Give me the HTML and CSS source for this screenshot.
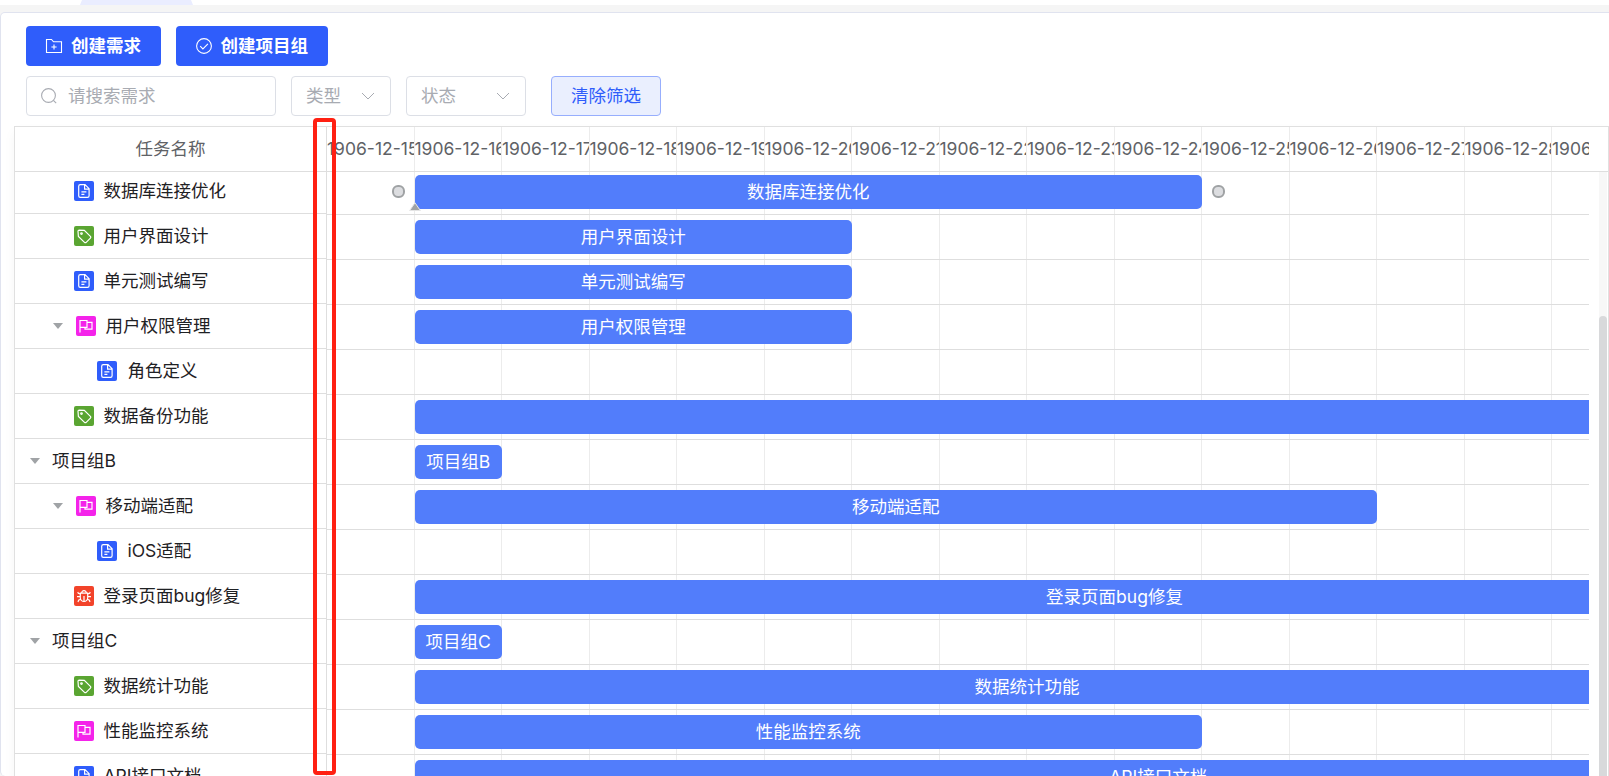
FILE: index.html
```html
<!DOCTYPE html>
<html lang="zh">
<head>
    <meta charset="UTF-8">
    <meta name="viewport" content="width=device-width, initial-scale=1.0">
    <title>需求甘特图</title>
    <link rel="stylesheet" href="styles.css">
</head>
<body>
  <!-- 图标 -->
  <svg class="sprite" aria-hidden="true">
    <symbol id="icon-doc" viewBox="0 0 20 20">
      <path d="M11 3.600H6.300a1.600 1.600 0 0 0-1.600 1.600v9.600a1.600 1.600 0 0 0 1.600 1.600h7.200a1.600 1.600 0 0 0 1.600-1.600V7.700zM10.600 3.800v4.400h4.300M7.400 10.800h5M7.400 13.300h3"/>
    </symbol>
    <symbol id="icon-tag" viewBox="0 0 20 20">
      <path d="M4 5.300a1.200 1.200 0 0 1 1.200-1.200l5.100.3 6.100 6a1.200 1.200 0 0 1 0 1.700l-4.200 4.200a1.200 1.200 0 0 1-1.700 0l-6.100-5.900z"/>
      <circle cx="7.500" cy="7.600" r=".8"/>
    </symbol>
    <symbol id="icon-flag" viewBox="0 0 20 20">
      <path d="M4 16.400V4.500h7v6.900H4M11 6.300h5v6.900H9v-1.800"/>
    </symbol>
    <symbol id="icon-bug" viewBox="0 0 20 20">
      <path d="M6.300 7.200h7.400v4.600a3.700 3.700 0 0 1-7.400 0zM7.600 7.200a2.400 2.600 0 0 1 4.800 0M10 10v5.400M3 10.600h3.300M13.700 10.600H17M3.800 6l.5 1.200 2 .8M16.200 6l-.5 1.200-2 .8M4 16l.6-1.700 2-1M16 16l-.6-1.700-2-1"/>
    </symbol>
  </svg>

  <div class="topbar"><div class="tab"></div></div>

  <div class="card">
    <!-- 操作按钮 -->
    <div class="toolbar">
      <button class="btn primary">
        <svg class="btn-icon" viewBox="0 0 18 18"><path d="M1.500 15.500v-13h5l2 2.300h8v10.700zM9 7.400v5.200M6.400 10h5.200"/></svg>
        <span>创建需求</span>
      </button>
      <button class="btn primary">
        <svg class="btn-icon" viewBox="0 0 18 18"><circle cx="9" cy="9" r="7.400"/><path d="M5.200 9.200l2.700 2.700 5-5"/></svg>
        <span>创建项目组</span>
      </button>
    </div>

    <!-- 筛选条件 -->
    <div class="toolbar">
      <div class="field search">
        <svg class="field-icon" viewBox="0 0 18 18"><circle cx="8.500" cy="8.500" r="6.900"/><path d="M13.400 13.400l2.800 2.800"/></svg>
        <span>请搜索需求</span>
      </div>
      <div class="field type">
        <span>类型</span>
        <svg class="arrow" viewBox="0 0 14 8"><path d="M1 1l6 6 6-6"/></svg>
      </div>
      <div class="field status">
        <span>状态</span>
        <svg class="arrow" viewBox="0 0 14 8"><path d="M1 1l6 6 6-6"/></svg>
      </div>
      <button class="btn plain">清除筛选</button>
    </div>

    <!-- 甘特图 -->
    <div class="gantt">
      <div class="gantt-head">
        <div class="name-head">任务名称</div>
        <div class="scale" id="scale"></div>
      </div>
      <div class="gantt-body">
        <div class="names"><div class="name-list" id="nameList"></div></div>
        <div class="timeline"><div class="bar-list" id="barList"></div></div>
        <div class="scrollbar"><div class="thumb"></div></div>
      </div>
    </div>
  </div>

  <div class="highlight"></div>

  <script>
    // 任务数据：days 为 0 时不显示进度条
    const tasks = [
        { name: "数据库连接优化", icon: "doc", level: 1, days: 9, selected: true },
        { name: "用户界面设计", icon: "tag", level: 1, days: 5 },
        { name: "单元测试编写", icon: "doc", level: 1, days: 5 },
        { name: "用户权限管理", icon: "flag", level: 1, days: 5, open: true },
        { name: "角色定义", icon: "doc", level: 2, days: 0 },
        { name: "数据备份功能", icon: "tag", level: 1, days: 40 },
        { name: "项目组B", level: 0, days: 1, open: true },
        { name: "移动端适配", icon: "flag", level: 1, days: 11, open: true },
        { name: "iOS适配", icon: "doc", level: 2, days: 0 },
        { name: "登录页面bug修复", icon: "bug", level: 1, days: 16 },
        { name: "项目组C", level: 0, days: 1, open: true },
        { name: "数据统计功能", icon: "tag", level: 1, days: 14 },
        { name: "性能监控系统", icon: "flag", level: 1, days: 9 },
        { name: "API接口文档", icon: "doc", level: 1, days: 17 },
    ];
    const dayWidth = 87.5;

    function renderScale() {
        let html = "";
        for (let day = 15; day < 30; day++) {
            html += `<div class="day">1906-12-${day}</div>`;
        }
        document.getElementById("scale").innerHTML = html;
    }

    function renderNames() {
        document.getElementById("nameList").innerHTML = tasks.map(task => {
            const caret = task.open ? '<i class="caret"></i>' : "";
            const icon = task.icon
                ? `<svg class="task-icon ${task.icon}"><use href="#icon-${task.icon}"/></svg>`
                : "";
            return `<div class="name-row level-${task.level}${task.open ? " open" : ""}">${caret}${icon}<span>${task.name}</span></div>`;
        }).join("");
    }

    function renderBars() {
        document.getElementById("barList").innerHTML = tasks.map(task => {
            if (!task.days) {
                return '<div class="bar-row"></div>';
            }
            const handles = task.selected
                ? '<i class="dot start"></i><i class="dot end"></i><svg class="progress" viewBox="0 0 12 9"><path d="M6 .8l5.300 7.700H.7z"/></svg>'
                : "";
            return `<div class="bar-row"><div class="bar" style="width: ${task.days * dayWidth}px">${task.name}${handles}</div></div>`;
        }).join("");
    }

    renderScale();
    renderNames();
    renderBars();
  </script>
</body>
</html>
```
FILE: styles.css
```css
/* 全局样式 */
* {
    box-sizing: border-box;
}

body {
    margin: 0;
    height: 100vh;
    display: flex;
    flex-direction: column;
    overflow: hidden;
    background: #f5f5f5;
    color: #1f2124;
    font-family: Inter, 'Noto Sans CJK SC', sans-serif;
    font-size: 17.5px;
    line-height: 24px;
}

svg {
    fill: none;
    stroke: currentColor;
}

.sprite {
    position: absolute;
    width: 0;
    height: 0;
}

/* 顶部标签栏 */
.topbar {
    flex: none;
    height: 5px;
    padding-left: 80px;
    background: #fff;
}

.tab {
    width: 113px;
    height: 5px;
    background: #eaedff;
    clip-path: polygon(2px 0, 111px 0, 100% 100%, 0 100%);
}

/* 主卡片 */
.card {
    flex: 1;
    min-height: 0;
    display: flex;
    flex-direction: column;
    gap: 10px;
    margin: 7px -10px 0 0;
    padding: 13px 10px 0 13px;
    border: 1px solid #e0e3ef;
    border-bottom: 0;
    border-radius: 5px;
    background: #fff;
}

.toolbar {
    flex: none;
    display: flex;
    gap: 15px;
    height: 40px;
    padding-left: 12px;
}

/* 按钮样式 */
.btn {
    display: flex;
    align-items: center;
    justify-content: center;
    padding: 0;
    border: 0;
    border-radius: 4px;
    font: inherit;
    white-space: nowrap;
}

.primary {
    gap: 8px;
    padding: 0 19.5px 0 19px;
    background: #2f5dfb;
    color: #fff;
    font-weight: 700;
}

.btn-icon {
    width: 18px;
    height: 18px;
    stroke-width: 1.1;
}

.plain {
    width: 110px;
    margin-left: 10px;
    border: 1px solid #97aefd;
    background: #eaeffe;
    color: #2f5dfb;
}

/* 输入框与下拉框 */
.field {
    display: flex;
    align-items: center;
    justify-content: space-between;
    padding: 0 15px 0 14px;
    border: 1px solid #dcdfe6;
    border-radius: 4px;
    color: #a8abb2;
}

.search {
    width: 250px;
    justify-content: flex-start;
    gap: 10px;
    padding-left: 13px;
}

.type {
    width: 100px;
}

.status {
    width: 120px;
}

.field-icon {
    width: 18px;
    height: 18px;
    stroke-width: 1.1;
}

.arrow {
    width: 14px;
    height: 8px;
}

/* 甘特图容器 */
.gantt {
    flex: 1;
    min-height: 0;
    display: flex;
    flex-direction: column;
    width: 1595px;
    border: 1px solid #e0e0e0;
    border-bottom: 0;
    box-shadow: 0 6px 12px rgba(0, 0, 0, 0.04);
}

.gantt-head {
    flex: none;
    display: flex;
    height: 45px;
    border-bottom: 1px solid #dedede;
    color: #606266;
    line-height: 44px;
}

.name-head {
    width: 312px;
    border-right: 1px solid #dedede;
    text-align: center;
}

.scale {
    display: flex;
    width: 1262px;
    overflow: hidden;
}

.day {
    flex: none;
    width: 87.5px;
    border-right: 1px solid #ececec;
    overflow: hidden;
    white-space: nowrap;
}

.gantt-body {
    flex: 1;
    min-height: 0;
    display: flex;
}

/* 左侧任务名称 */
.names {
    width: 312px;
    border-right: 1px solid #dedede;
    overflow: hidden;
}

.name-list {
    margin-top: -3px;
}

.name-row {
    display: flex;
    align-items: center;
    height: 45px;
    border-bottom: 1px solid #dedede;
    white-space: nowrap;
}

.name-row span {
    margin-top: -1px;
}

.level-0 {
    padding-left: 15px;
}

.level-1 {
    padding-left: 59px;
}

.level-1.open {
    padding-left: 38px;
}

.level-2 {
    padding-left: 82px;
}

.caret {
    width: 10px;
    margin-right: 13px;
    border: 5px solid transparent;
    border-top: 6px solid #a0a3a6;
    border-bottom: 0;
}

.level-0 .caret {
    margin-right: 12px;
}

.task-icon {
    width: 20px;
    height: 20px;
    margin-right: 9.5px;
    border-radius: 2px;
    color: #fff;
    stroke-width: 1.2;
}

.level-2 .task-icon {
    margin-right: 10.5px;
}

.doc {
    background: #2f5dfb;
}

.tag {
    background: #5aa532;
}

.flag {
    background: #f423ea;
}

.bug {
    background: #f2432a;
}

/* 右侧时间轴，两天一组画竖线 */
.timeline {
    width: 1262px;
    overflow: hidden;
    background: repeating-linear-gradient(to right, transparent 0 87px, #ececec 87px 88px, transparent 88px 174px, #ececec 174px 175px);
}

.bar-list {
    margin-top: -2px;
}

.bar-row {
    height: 45px;
    padding: 5px 0 0 87.5px;
    border-bottom: 1px solid #dedede;
}

.bar {
    position: relative;
    height: 34px;
    border-radius: 5px;
    background: #527dfb;
    color: #fff;
    line-height: 33px;
    text-align: center;
    white-space: nowrap;
}

/* 选中任务的拖拽点 */
.dot {
    position: absolute;
    top: 10px;
    width: 13px;
    height: 13px;
    border: 2px solid #9fa2a4;
    border-radius: 6px;
    background: #dcdde0;
}

.start {
    left: -23px;
}

.end {
    right: -23px;
}

.progress {
    position: absolute;
    left: -6px;
    bottom: -2px;
    width: 12px;
    height: 9px;
    fill: #9fa2a4;
    stroke: #e4e4e4;
}

/* 滚动条 */
.scrollbar {
    width: 8px;
    margin-left: 10px;
    padding-top: 144px;
    background: #f7f7f7;
}

.thumb {
    height: 100%;
    border-radius: 4px 4px 0 0;
    background: #d8d9db;
}

/* 红色标注框 */
.highlight {
    position: absolute;
    left: 313px;
    top: 118px;
    width: 23px;
    height: 657px;
    border: 4px solid #ff2012;
    border-radius: 4px;
}
```
